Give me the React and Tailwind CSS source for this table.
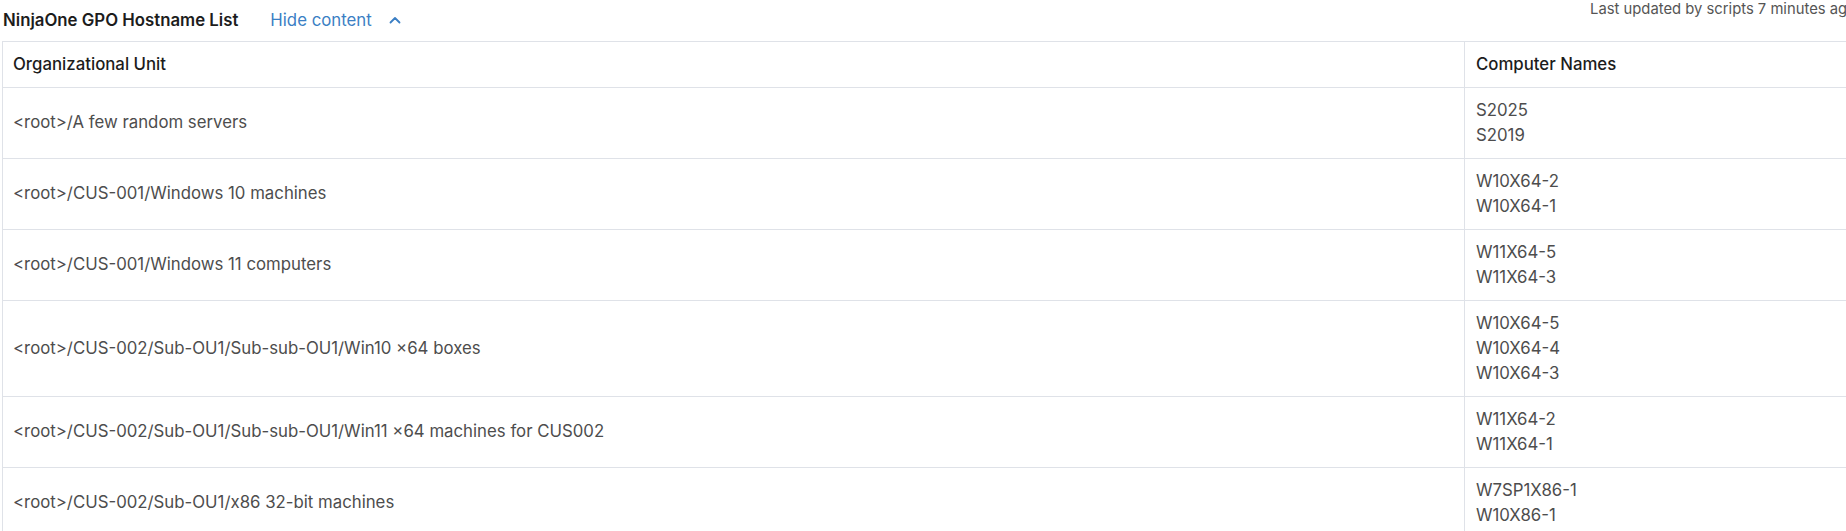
import React from 'react';

const rows = [
  { ou: '<root>/A few random servers', names: ['S2025', 'S2019'] },
  { ou: '<root>/CUS-001/Windows 10 machines', names: ['W10X64-2', 'W10X64-1'] },
  { ou: '<root>/CUS-001/Windows 11 computers', names: ['W11X64-5', 'W11X64-3'] },
  {
    ou: '<root>/CUS-002/Sub-OU1/Sub-sub-OU1/Win10 ×64 boxes',
    names: ['W10X64-5', 'W10X64-4', 'W10X64-3'],
  },
  {
    ou: '<root>/CUS-002/Sub-OU1/Sub-sub-OU1/Win11 ×64 machines for CUS002',
    names: ['W11X64-2', 'W11X64-1'],
  },
  { ou: '<root>/CUS-002/Sub-OU1/x86 32-bit machines', names: ['W7SP1X86-1', 'W10X86-1'] },
];

const ChevronUp = () => (
  <svg width="12" height="8" viewBox="0 0 12 8" fill="none" className="ml-[17px]">
    <path d="M1.5 6.5 6 2l4.5 4.5" stroke="#3b7fc4" strokeWidth="1.8" strokeLinecap="round" strokeLinejoin="round" />
  </svg>
);

const App = () => {
  return (
    <div className="w-[1846px] h-[531px] overflow-hidden bg-white font-['Inter',sans-serif]">
      <div className="w-[1860px]">
        <div className="flex items-start justify-between h-[41px]">
          <div className="flex items-center pl-[3px] pt-[8px]">
            <span className="text-[16.8px] font-semibold text-[#1c1c1c] leading-[24px]">
              NinjaOne GPO Hostname List
            </span>
            <button className="flex items-center ml-[32px] text-[16.8px] text-[#3b7fc4] leading-[24px]">
              Hide content
              <ChevronUp />
            </button>
          </div>
          <span className="text-[14.8px] text-[#555] leading-[18px] pr-[4px]">
            Last updated by scripts 7 minutes ago
          </span>
        </div>
        <div className="ml-[2px]">
          <table className="w-full border-collapse border border-[#dfe2e8]">
            <thead>
              <tr className="h-[46px]">
                <th className="w-[1462px] border border-[#dfe2e8] px-[10px] text-left text-[16.8px] font-medium text-[#1c1c1c]">
                  Organizational Unit
                </th>
                <th className="border border-[#dfe2e8] px-[11px] text-left text-[16.8px] font-medium text-[#1c1c1c]">
                  Computer Names
                </th>
              </tr>
            </thead>
            <tbody>
              {rows.map((r) => (
                <tr key={r.ou}>
                  <td className="border border-[#dfe2e8] px-[10px] py-[10px] text-[16.8px] text-[#4d4d4d] align-middle">
                    {r.ou}
                  </td>
                  <td className="border border-[#dfe2e8] px-[11px] py-[10px] text-[16.8px] leading-[25px] text-[#4d4d4d]">
                    {r.names.map((n) => (
                      <div key={n}>{n}</div>
                    ))}
                  </td>
                </tr>
              ))}
            </tbody>
          </table>
        </div>
      </div>
    </div>
  );
};

export default App;
